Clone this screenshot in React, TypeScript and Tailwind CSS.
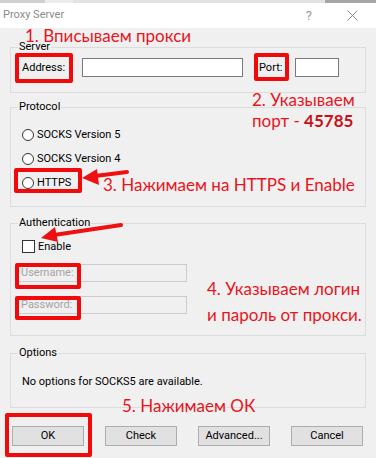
import React from 'react';

const ui = { fontFamily: 'Roboto, "Noto Sans", sans-serif' };
const note = { fontFamily: 'Lato, "Open Sans", sans-serif' };

function Group({ title, className, children }: { title: string; className: string; children: React.ReactNode }) {
  return (
    <div className={`relative border border-[#dcdcdc] ${className}`}>
      <span className="absolute -top-[8px] left-[7px] bg-[#f0f0f0] px-[1px] text-[11px] leading-[14px] text-black">
        {title}
      </span>
      {children}
    </div>
  );
}

function Radio({ label }: { label: string }) {
  return (
    <div className="flex h-[24px] items-center">
      <span className="h-[12px] w-[12px] rounded-full border border-[#333] bg-white" />
      <span className="ml-[3px] text-[11px] leading-[14px] text-black">{label}</span>
    </div>
  );
}

function Btn({ label }: { label: string }) {
  return (
    <div className="flex h-[20px] w-[72px] items-center justify-center border border-[#adadad] bg-[#e1e1e1] text-[11px] text-black">
      {label}
    </div>
  );
}

function RedBox({ className }: { className: string }) {
  return <div className={`absolute rounded-[2px] border-4 border-[#f20a0a] ${className}`} />;
}

export default function App() {
  return (
    <div className="relative h-[458px] w-[376px] overflow-hidden bg-[#f0f0f0]" style={ui}>
      {/* top strip of the window behind */}
      <div className="flex h-[3px] bg-[#d0d0d0]">
        <div className="ml-[45px] w-[28px] bg-[#ececec]" />
        <div className="w-[252px] bg-[#e2e2e2]" />
        <div className="flex-1 bg-[#a6a6a6]" />
      </div>

      {/* title bar */}
      <div className="flex h-[25px] items-center bg-white pl-[3px]">
        <span className="text-[11px] text-[#8a8a8a]">Proxy Server</span>
        <span className="ml-auto mr-[35px] text-[13px] text-[#9a9a9a]">?</span>
        <svg width="11" height="11" viewBox="0 0 11 11" className="mr-[18px]">
          <path d="M0.5 0.5 L10.5 10.5 M10.5 0.5 L0.5 10.5" stroke="#8a8a8a" strokeWidth="1" fill="none" />
        </svg>
      </div>

      {/* dialog body */}
      <div className="flex flex-col px-[10px] pt-[19px]">
        <Group title="Server" className="h-[46px]">
          <div className="flex items-center pl-[11px] pt-[10px]">
            <span className="w-[60px] text-[11px] leading-[19px] text-black">Address:</span>
            <div className="h-[19px] w-[161px] border border-[#7a7a7a] bg-white" />
            <span className="ml-[16px] w-[36px] text-[11px] leading-[19px] text-black">Port:</span>
            <div className="h-[19px] w-[44px] border border-[#7a7a7a] bg-white" />
          </div>
        </Group>

        <Group title="Protocol" className="mt-[14px] h-[100px]">
          <div className="flex flex-col pl-[11px] pt-[15px]">
            <Radio label="SOCKS Version 5" />
            <Radio label="SOCKS Version 4" />
            <Radio label="HTTPS" />
          </div>
        </Group>

        <Group title="Authentication" className="mt-[16px] h-[113px]">
          <div className="flex flex-col pl-[11px] pt-[16px]">
            <div className="flex h-[13px] items-center">
              <span className="h-[13px] w-[13px] border border-[#333] bg-white" />
              <span className="ml-[3px] text-[11px] leading-[14px] text-black">Enable</span>
            </div>
            <div className="-ml-[4px] mt-[11px] flex h-[18px] w-[169px] items-center border border-[#cccccc] bg-[#f0f0f0] pl-[2px] text-[11px] text-[#a3a3a3]">
              Username:
            </div>
            <div className="-ml-[4px] mt-[14px] flex h-[18px] w-[169px] items-center border border-[#cccccc] bg-[#f0f0f0] pl-[2px] text-[11px] text-[#a3a3a3]">
              Password:
            </div>
          </div>
        </Group>

        <Group title="Options" className="mt-[17px] h-[55px]">
          <div className="pl-[11px] pt-[21px] text-[11px] leading-[14px] text-black">
            No options for SOCKS5 are available.
          </div>
        </Group>

        <div className="mt-[18px] flex justify-between pl-[2px] pr-[3px]">
          <Btn label="OK" />
          <Btn label="Check" />
          <Btn label="Advanced..." />
          <Btn label="Cancel" />
        </div>
      </div>

      {/* annotations */}
      <RedBox className="left-[15px] top-[53px] h-[30px] w-[58px]" />
      <RedBox className="left-[254px] top-[53px] h-[28px] w-[35px]" />
      <RedBox className="left-[14px] top-[168px] h-[25px] w-[68px]" />
      <RedBox className="left-[15px] top-[263px] h-[26px] w-[66px]" />
      <RedBox className="left-[15px] top-[296px] h-[24px] w-[66px]" />
      <RedBox className="left-[5px] top-[413px] h-[44px] w-[87px]" />

      <svg className="absolute left-0 top-0" width="376" height="458" viewBox="0 0 376 458">
        <path d="M127 172 L95 176" stroke="#ee1111" strokeWidth="4" strokeLinecap="round" />
        <path d="M82 178 L97 169 L99 185 Z" fill="#ee1111" />
        <path d="M121 225 L54 235" stroke="#ee1111" strokeWidth="4" strokeLinecap="round" />
        <path d="M41 238 L55 227 L58 242 Z" fill="#ee1111" />
      </svg>

      <div className="absolute left-[25px] top-[26px] text-[17px] leading-[20px] text-[#e8141c]" style={note}>
        1. Вписываем прокси
      </div>
      <div className="absolute left-[252px] top-[90px] text-[17px] leading-[20px] text-[#e8141c]" style={note}>
        2. Указываем
      </div>
      <div className="absolute left-[252px] top-[111px] text-[17px] leading-[20px] text-[#e8141c]" style={note}>
        порт - <span className="font-bold text-[#c8101a]">45785</span>
      </div>
      <div className="absolute left-[103px] top-[175px] text-[17px] leading-[20px] text-[#e8141c]" style={note}>
        3. Нажимаем на HTTPS и Enable
      </div>
      <div className="absolute left-[207px] top-[279px] text-[17px] leading-[20px] text-[#e8141c]" style={note}>
        4. Указываем логин
      </div>
      <div className="absolute left-[207px] top-[305px] text-[17px] leading-[20px] text-[#e8141c]" style={note}>
        и пароль от прокси.
      </div>
      <div className="absolute left-[122px] top-[396px] text-[17px] leading-[20px] text-[#e8141c]" style={note}>
        5. Нажимаем ОК
      </div>
    </div>
  );
}
